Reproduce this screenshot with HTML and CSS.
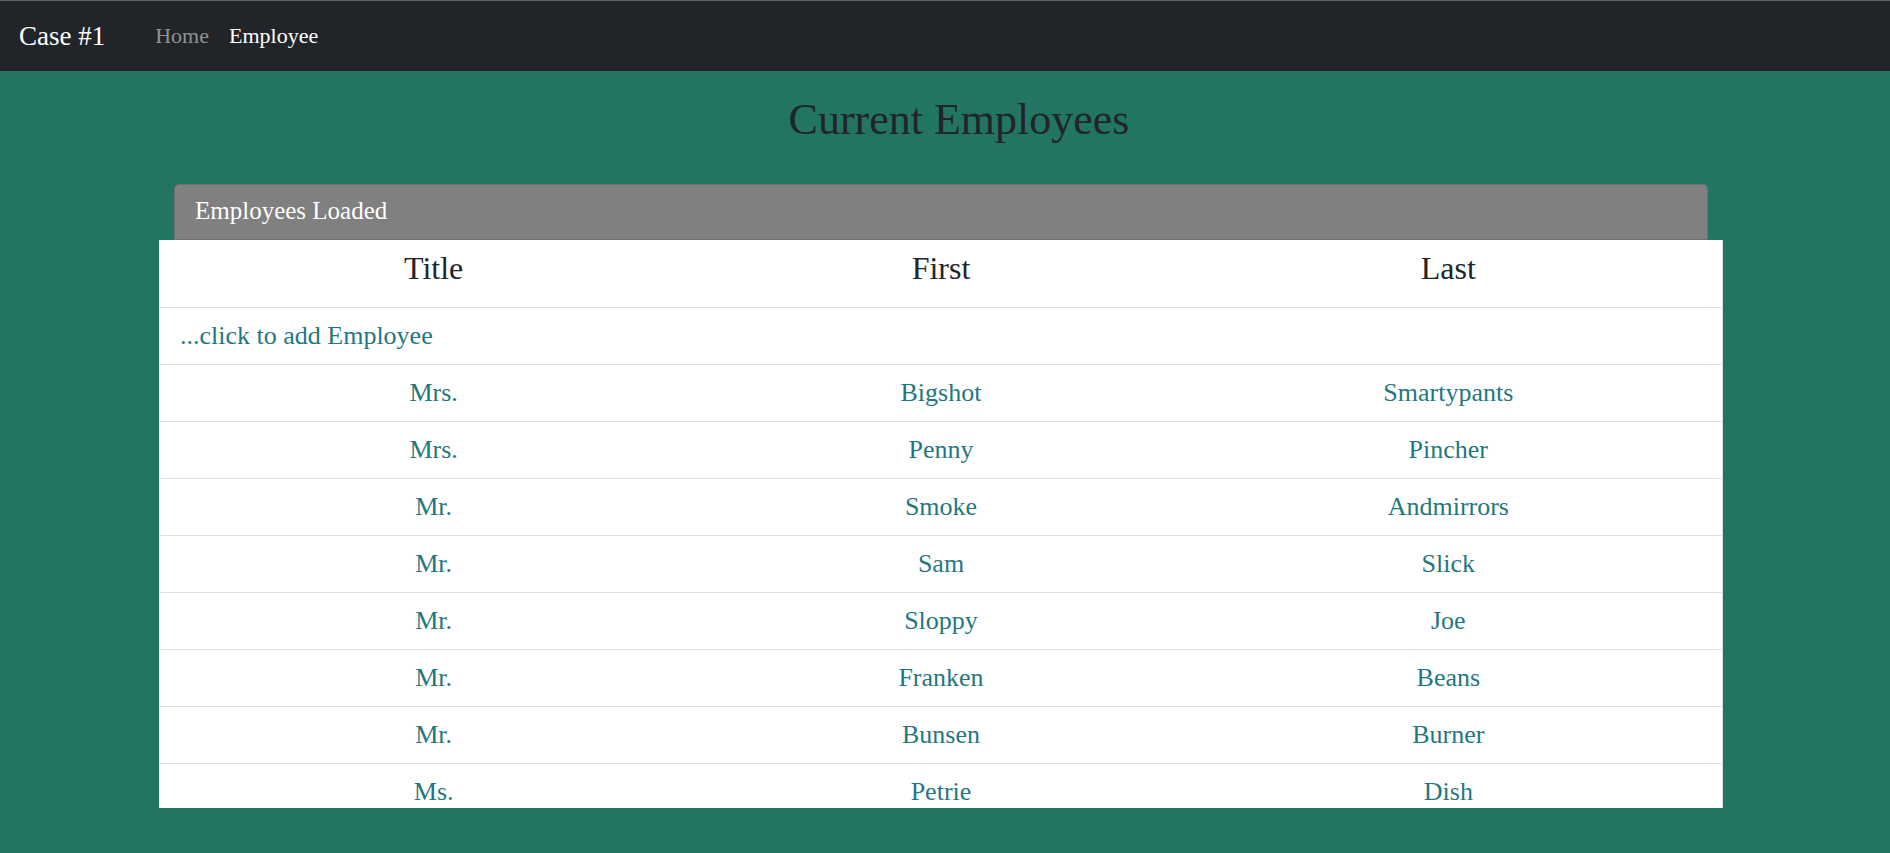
FILE: index.html
```html
<!DOCTYPE html>
<html lang="en">
<head>
<meta charset="utf-8">
<title>Case #1</title>
<link rel="stylesheet" href="styles.css">
</head>
<body>
<nav class="navbar">
  <a class="brand" href="#">Case #1</a>
  <a class="nav-link" href="#">Home</a>
  <a class="nav-link active" href="#">Employee</a>
</nav>
<main class="page">
  <h1 class="page-title">Current Employees</h1>
  <section class="panel">
    <div class="status" role="status">Employees Loaded</div>
    <div class="list">
      <table class="employees">
        <thead>
          <tr class="row head"><th>Title</th><th>First</th><th>Last</th></tr>
        </thead>
        <tbody>
          <tr class="row add"><td colspan="3"><button type="button" class="add-button">...click to add Employee</button></td></tr>
          <tr class="row"><td>Mrs.</td><td>Bigshot</td><td>Smartypants</td></tr>
          <tr class="row"><td>Mrs.</td><td>Penny</td><td>Pincher</td></tr>
          <tr class="row"><td>Mr.</td><td>Smoke</td><td>Andmirrors</td></tr>
          <tr class="row"><td>Mr.</td><td>Sam</td><td>Slick</td></tr>
          <tr class="row"><td>Mr.</td><td>Sloppy</td><td>Joe</td></tr>
          <tr class="row"><td>Mr.</td><td>Franken</td><td>Beans</td></tr>
          <tr class="row"><td>Mr.</td><td>Bunsen</td><td>Burner</td></tr>
          <tr class="row"><td>Ms.</td><td>Petrie</td><td>Dish</td></tr>
        </tbody>
      </table>
    </div>
  </section>
</main>
</body>
</html>
```
FILE: styles.css
```css
* { box-sizing: border-box; }

body {
  margin: 0;
  height: 100vh;
  display: flex;
  flex-direction: column;
  overflow: hidden;
  background: #227563;
  color: #212529;
  font-family: "Palatino Linotype", "Book Antiqua", Palatino, "Liberation Serif", serif;
  font-size: 26px;
}

.navbar {
  display: flex;
  align-items: center;
  gap: 20px;
  padding: 16px 19px;
  border-top: 1px solid #5c6066;
  background: #212529;
  line-height: 38px;
}

.brand {
  margin-right: 30px;
  color: #fff;
  font-size: 27px;
  text-decoration: none;
}

.nav-link {
  color: #909294;
  font-size: 22px;
  text-decoration: none;
}

.nav-link.active { color: #fff; }

.page {
  flex: 1;
  min-height: 0;
  display: flex;
  flex-direction: column;
  padding: 25px 167px 45px 159px;
}

.page-title {
  margin: 0 0 40px;
  padding-left: 36px;
  font-size: 44px;
  font-weight: 400;
  line-height: 48px;
  text-align: center;
}

.panel {
  flex: 1;
  min-height: 0;
  display: flex;
  flex-direction: column;
}

.status {
  margin: 0 15px;
  padding: 10px 20px 12px;
  border: 1px solid #6f6f6f;
  border-radius: 5px 5px 0 0;
  background: #808080;
  color: #fff;
  font-size: 25px;
  line-height: 32px;
}

.list {
  flex: 1;
  min-height: 0;
  overflow: hidden;
  border-left: 1px solid #f0f0f0;
  border-right: 1px solid #dfdfdf;
  background: #fff;
}

.employees,
.employees thead,
.employees tbody {
  display: block;
}

.row {
  display: grid;
  grid-template-columns: repeat(3, 1fr);
  padding: 10px 20px;
  border-bottom: 1px solid #dfdfdf;
  color: #1f7880;
  line-height: 36px;
  text-align: center;
}

.row th,
.row td {
  padding: 0;
  font-weight: 400;
}

.head {
  padding-bottom: 21px;
  color: #212529;
  font-size: 32px;
}

.add td {
  grid-column: 1 / -1;
  text-align: left;
}

.add-button {
  display: block;
  padding: 0;
  border: 0;
  background: none;
  color: inherit;
  font: inherit;
}
```
